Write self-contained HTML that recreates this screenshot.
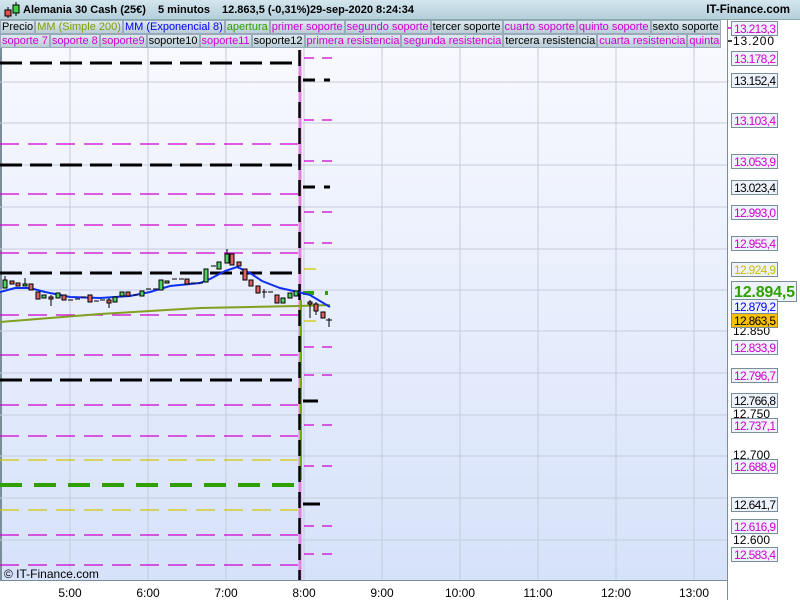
<!DOCTYPE html>
<html><head><meta charset="utf-8"><style>
*{margin:0;padding:0;box-sizing:border-box}
body{width:800px;height:600px;overflow:hidden;background:#fff;font-family:"Liberation Sans",sans-serif;position:relative}
#title{position:absolute;left:0;top:0;width:800px;height:20px;background:linear-gradient(#d4e6ee,#b4cfdb);font-size:11px;font-weight:bold;color:#000;line-height:20px;border-bottom:1px solid #8aa;z-index:2}
#title span{position:absolute;top:0}
.row{position:absolute;left:0;height:14px;width:728px;overflow:hidden;font-size:11px;line-height:13px;white-space:nowrap;z-index:2}
.row span{display:inline-block;background:linear-gradient(#dde9ef,#b9ccd6);border:1px solid #9ab;padding:0 1px;margin-right:0;height:14px}
.m{color:#d000d0}.k{color:#000}
svg#c{position:absolute;left:0;top:0;z-index:1}
</style></head><body>
<div id="title"><svg width="18" height="18" style="position:absolute;left:3px;top:1px"><line x1="5" y1="6" x2="5" y2="17" stroke="#000"/><rect x="2" y="9" width="6" height="6" fill="#e05050" stroke="#000"/><line x1="13" y1="1" x2="13" y2="15" stroke="#000"/><rect x="10" y="4" width="6" height="8" fill="#40d040" stroke="#000"/></svg><span style="left:23px">Alemania 30 Cash (25€)</span><span style="left:158px">5 minutos</span><span style="left:222px">12.863,5 (-0,31%)</span><span style="left:310px">29-sep-2020 8:24:34</span><span style="right:10px;font-size:11.5px">IT-Finance.com</span></div>
<div class="row" style="top:20px"><span class="k">Precio</span><span style="color:#80a000">MM (Simple 200)</span><span style="color:#0000ff">MM (Exponencial 8)</span><span style="color:#30a000">apertura</span><span class="m">primer soporte</span><span class="m">segundo soporte</span><span class="k">tercer soporte</span><span class="m">cuarto soporte</span><span class="m">quinto soporte</span><span class="k">sexto soporte</span></div>
<div class="row" style="top:34px"><span class="m">soporte 7</span><span class="m">soporte 8</span><span class="m">soporte9</span><span class="k">soporte10</span><span class="m">soporte11</span><span class="k">soporte12</span><span class="m">primera resistencia</span><span class="m">segunda resistencia</span><span class="k">tercera resistencia</span><span class="m">cuarta resistencia</span><span class="m">quinta</span></div>
<svg id="c" width="800" height="600" viewBox="0 0 800 600">
<defs><linearGradient id="bg" x1="0" y1="0" x2="0" y2="1"><stop offset="0" stop-color="#f8f9fe"/><stop offset="1" stop-color="#d6e2fa"/></linearGradient></defs>
<rect x="0" y="48" width="728" height="532" fill="url(#bg)"/>
<rect x="0" y="48" width="2" height="532" fill="#7a8e9a"/>
<g stroke="#c4ccdc" stroke-width="1">
<line x1="70" y1="48" x2="70" y2="580"/><line x1="148" y1="48" x2="148" y2="580"/><line x1="226" y1="48" x2="226" y2="580"/><line x1="304" y1="48" x2="304" y2="580"/><line x1="382" y1="48" x2="382" y2="580"/><line x1="460" y1="48" x2="460" y2="580"/><line x1="538" y1="48" x2="538" y2="580"/><line x1="616" y1="48" x2="616" y2="580"/><line x1="694" y1="48" x2="694" y2="580"/>
<line x1="0" y1="82" x2="728" y2="82"/><line x1="0" y1="123" x2="728" y2="123"/><line x1="0" y1="165" x2="728" y2="165"/><line x1="0" y1="207" x2="728" y2="207"/><line x1="0" y1="249" x2="728" y2="249"/><line x1="0" y1="290" x2="728" y2="290"/><line x1="0" y1="331" x2="728" y2="331"/><line x1="0" y1="373" x2="728" y2="373"/><line x1="0" y1="415" x2="728" y2="415"/><line x1="0" y1="456" x2="728" y2="456"/><line x1="0" y1="498" x2="728" y2="498"/><line x1="0" y1="540" x2="728" y2="540"/>
</g>
<g stroke="#d000d0" stroke-width="1.3" stroke-dasharray="19,9">
<line x1="0" y1="144" x2="298" y2="144"/><line x1="0" y1="194" x2="298" y2="194"/><line x1="0" y1="225" x2="298" y2="225"/><line x1="0" y1="253" x2="298" y2="253"/><line x1="0" y1="315" x2="298" y2="315"/><line x1="0" y1="355" x2="298" y2="355"/><line x1="0" y1="405" x2="298" y2="405"/><line x1="0" y1="436" x2="298" y2="436"/><line x1="0" y1="535" x2="298" y2="535"/><line x1="0" y1="565" x2="298" y2="565"/>
</g>
<g stroke="#d0c800" stroke-width="1.3" stroke-dasharray="19,9"><line x1="0" y1="460" x2="298" y2="460"/><line x1="0" y1="510" x2="298" y2="510"/></g>
<g stroke="#000" stroke-width="3" stroke-dasharray="22,8"><line x1="0" y1="63" x2="298" y2="63"/><line x1="0" y1="165" x2="298" y2="165"/><line x1="0" y1="273" x2="298" y2="273"/><line x1="0" y1="380" x2="298" y2="380"/></g>
<line x1="0" y1="485" x2="298" y2="485" stroke="#30a000" stroke-width="4" stroke-dasharray="22,12"/>
<g stroke="#d000d0" stroke-width="1.3" stroke-dasharray="10,8">
<line x1="304" y1="58" x2="332" y2="58"/><line x1="304" y1="120" x2="332" y2="120"/><line x1="304" y1="161" x2="332" y2="161"/><line x1="304" y1="212" x2="332" y2="212"/><line x1="304" y1="243" x2="332" y2="243"/><line x1="304" y1="347" x2="332" y2="347"/><line x1="304" y1="375" x2="332" y2="375"/><line x1="304" y1="425" x2="332" y2="425"/><line x1="304" y1="466" x2="332" y2="466"/><line x1="304" y1="526" x2="332" y2="526"/><line x1="304" y1="554" x2="332" y2="554"/>
</g>
<g stroke="#d0c800" stroke-width="1.3"><line x1="304" y1="269" x2="316" y2="269"/><line x1="304" y1="321" x2="316" y2="321"/></g>
<g stroke="#000" stroke-width="3"><line x1="303" y1="80" x2="315" y2="80"/><line x1="324" y1="80" x2="330" y2="80"/><line x1="303" y1="187" x2="315" y2="187"/><line x1="324" y1="187" x2="330" y2="187"/><line x1="303" y1="401" x2="318" y2="401"/><line x1="303" y1="504" x2="320" y2="504"/></g>
<g stroke="#30a000" stroke-width="4"><line x1="303" y1="293" x2="314" y2="293"/><line x1="325" y1="293" x2="328" y2="293"/></g>
<line x1="300" y1="50" x2="300" y2="580" stroke="#e080e0" stroke-width="3"/>
<line x1="301" y1="300" x2="301" y2="480" stroke="#70b000" stroke-width="2"/>
<line x1="299.5" y1="50" x2="299.5" y2="580" stroke="#000" stroke-width="2.5" stroke-dasharray="16,10"/>
<polyline fill="none" stroke="#80a020" stroke-width="2" points="0,322 50,318 100,314 150,311 200,308 250,307 298,306 330,305"/>
<polyline fill="none" stroke="#1030f0" stroke-width="2" points="0,292 15,288 30,288 45,292 70,297 100,298 130,296 150,292 170,286 200,283 210,279 225,271 237,267 250,273 262,281 280,288 298,292 310,295 330,307"/>
<g stroke="#000" stroke-width="1">
<line x1="5" y1="276" x2="5" y2="288"/><rect x="3" y="280" width="4" height="8" fill="#50d060"/>
<rect x="10" y="281" width="4" height="3" fill="#e06060"/><rect x="16" y="283" width="4" height="3" fill="#e06060"/>
<line x1="25" y1="278" x2="25" y2="286"/><rect x="23" y="284" width="4" height="2" fill="#50d060"/>
<rect x="29" y="284" width="4" height="6" fill="#e06060"/><rect x="36" y="292" width="4" height="7" fill="#e06060"/>
<rect x="42" y="295" width="4" height="3" fill="#50d060"/><line x1="51" y1="295" x2="51" y2="306"/><rect x="49" y="297" width="4" height="2" fill="#e06060"/>
<rect x="56" y="293" width="4" height="5" fill="#50d060"/><rect x="62" y="295" width="4" height="5" fill="#e06060"/>
<line x1="68" y1="300" x2="73" y2="300"/><line x1="75" y1="299" x2="80" y2="299"/><line x1="81" y1="297" x2="86" y2="297"/>
<rect x="88" y="295" width="4" height="7" fill="#e06060"/><line x1="94" y1="301" x2="99" y2="301"/><line x1="100" y1="300" x2="105" y2="300"/>
<line x1="109" y1="298" x2="109" y2="308"/><rect x="107" y="300" width="4" height="3" fill="#e06060"/>
<rect x="113" y="297" width="4" height="5" fill="#50d060"/><rect x="120" y="292" width="4" height="4" fill="#50d060"/><rect x="126" y="292" width="4" height="4" fill="#e06060"/>
<line x1="133" y1="295" x2="138" y2="295"/><rect x="140" y="291" width="4" height="5" fill="#50d060"/><line x1="146" y1="289" x2="151" y2="289"/><line x1="153" y1="289" x2="158" y2="289"/>
<rect x="159" y="280" width="4" height="10" fill="#50d060"/><rect x="165" y="281" width="4" height="2" fill="#50d060"/><line x1="172" y1="279" x2="177" y2="279"/><line x1="179" y1="279" x2="184" y2="279"/>
<rect x="185" y="279" width="4" height="5" fill="#e06060"/><line x1="191" y1="283" x2="196" y2="283"/><line x1="198" y1="283" x2="203" y2="283"/>
<rect x="204" y="269" width="4" height="13" fill="#50d060"/><line x1="211" y1="266" x2="216" y2="266"/><rect x="217" y="262" width="4" height="7" fill="#50d060"/>
<line x1="227" y1="249" x2="227" y2="263"/><rect x="225" y="254" width="4" height="9" fill="#50d060"/><rect x="230" y="254" width="4" height="11" fill="#e06060"/>
<rect x="237" y="262" width="4" height="4" fill="#e06060"/><rect x="243" y="269" width="4" height="11" fill="#e06060"/><rect x="249" y="280" width="4" height="6" fill="#e06060"/>
<rect x="256" y="286" width="4" height="7" fill="#e06060"/><line x1="264" y1="289" x2="264" y2="298"/><line x1="262" y1="292" x2="267" y2="292"/><line x1="268" y1="292" x2="273" y2="292"/>
<rect x="275" y="295" width="4" height="8" fill="#e06060"/><rect x="281" y="298" width="4" height="5" fill="#50d060"/><rect x="288" y="293" width="4" height="5" fill="#50d060"/><rect x="294" y="291" width="4" height="5" fill="#50d060"/>
<line x1="310" y1="300" x2="310" y2="318"/><rect x="308" y="302" width="4" height="2" fill="#e06060"/>
<line x1="316" y1="302" x2="316" y2="315"/><rect x="314" y="304" width="4" height="7" fill="#e06060"/>
<rect x="321" y="312" width="4" height="6" fill="#e06060"/><line x1="329" y1="318" x2="329" y2="327"/><line x1="326" y1="320" x2="332" y2="320"/>
</g>
<text x="4" y="578" font-size="12" font-family="Liberation Sans">© IT-Finance.com</text>
<line x1="727.5" y1="20" x2="727.5" y2="600" stroke="#7a8e9a"/>
<line x1="0" y1="580.5" x2="728" y2="580.5" stroke="#7a8e9a"/>
<g font-size="12" font-family="Liberation Sans" text-anchor="middle">
<text x="70" y="597">5:00</text><text x="148" y="597">6:00</text><text x="226" y="597">7:00</text><text x="304" y="597">8:00</text><text x="382" y="597">9:00</text><text x="460" y="597">10:00</text><text x="538" y="597">11:00</text><text x="616" y="597">12:00</text><text x="694" y="597">13:00</text>
</g>
<g stroke-width="1.5">
<line x1="728" y1="28" x2="732" y2="28" stroke="#d000d0"/><line x1="728" y1="41" x2="732" y2="41" stroke="#000"/>
</g>
<g font-size="12" font-family="Liberation Sans" fill="#000">
<text x="733" y="45" textLength="41">13.200</text><text x="733" y="335" textLength="37">12.850</text><text x="733" y="418" textLength="37">12.750</text><text x="733" y="459" textLength="37">12.700</text><text x="733" y="544" textLength="37">12.600</text>
</g>
<g font-size="12" font-family="Liberation Sans">
<g fill="#eef2fa" stroke="#7a8e9a">
<rect x="731.5" y="21.5" width="46" height="14"/><rect x="731.5" y="51.5" width="46" height="14"/><rect x="731.5" y="73.5" width="46" height="14"/><rect x="731.5" y="113.5" width="46" height="14"/><rect x="731.5" y="154.5" width="46" height="14"/><rect x="731.5" y="180.5" width="46" height="14"/><rect x="731.5" y="205.5" width="46" height="14"/><rect x="731.5" y="236.5" width="46" height="14"/><rect x="731.5" y="262.5" width="46" height="14"/><rect x="731.5" y="281.5" width="65" height="20"/><rect x="731.5" y="299.5" width="46" height="14"/><rect x="731.5" y="340.5" width="46" height="14"/><rect x="731.5" y="368.5" width="46" height="14"/><rect x="731.5" y="393.5" width="46" height="14"/><rect x="731.5" y="418.5" width="46" height="14"/><rect x="731.5" y="459.5" width="46" height="14"/><rect x="731.5" y="497.5" width="46" height="14"/><rect x="731.5" y="519.5" width="46" height="14"/><rect x="731.5" y="547.5" width="46" height="14"/>
</g>
<rect x="731.5" y="313.5" width="46" height="14" fill="#f8c000" stroke="#7a8e9a"/>
<text x="734" y="33" fill="#d000d0" textLength="42">13.213,3</text><text x="734" y="63" fill="#d000d0" textLength="42">13.178,2</text><text x="734" y="85" fill="#000" textLength="42">13.152,4</text><text x="734" y="125" fill="#d000d0" textLength="42">13.103,4</text><text x="734" y="166" fill="#d000d0" textLength="42">13.053,9</text><text x="734" y="192" fill="#000" textLength="42">13.023,4</text><text x="734" y="217" fill="#d000d0" textLength="42">12.993,0</text><text x="734" y="248" fill="#d000d0" textLength="42">12.955,4</text><text x="734" y="274" fill="#c8c000" textLength="42">12.924,9</text>
<text x="734" y="297" fill="#30a000" font-size="16" font-weight="bold" textLength="61">12.894,5</text>
<text x="734" y="311" fill="#0000ff" textLength="42">12.879,2</text><text x="734" y="325" fill="#000" textLength="42">12.863,5</text><text x="734" y="352" fill="#d000d0" textLength="42">12.833,9</text><text x="734" y="380" fill="#d000d0" textLength="42">12.796,7</text><text x="734" y="405" fill="#000" textLength="42">12.766,8</text><text x="734" y="430" fill="#d000d0" textLength="42">12.737,1</text><text x="734" y="471" fill="#d000d0" textLength="42">12.688,9</text><text x="734" y="509" fill="#000" textLength="42">12.641,7</text><text x="734" y="531" fill="#d000d0" textLength="42">12.616,9</text><text x="734" y="559" fill="#d000d0" textLength="42">12.583,4</text>
</g>
</svg>
</body></html>
